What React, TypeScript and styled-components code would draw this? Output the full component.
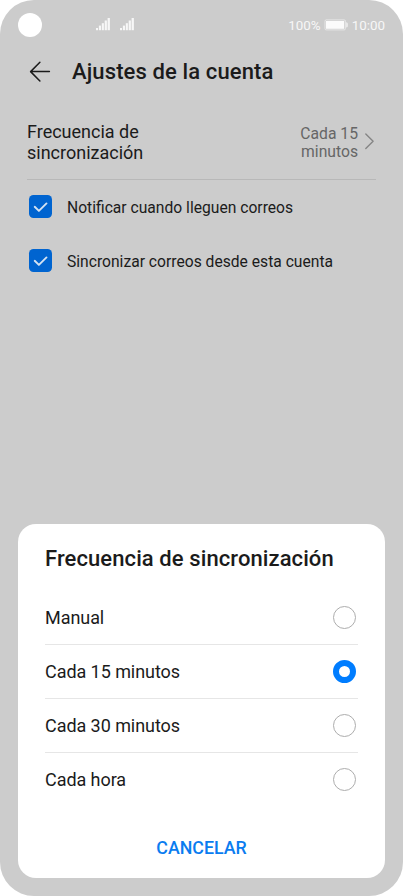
import React, { useState } from "react";
import styled, { createGlobalStyle } from "styled-components";

const GlobalStyle = createGlobalStyle`
  *, *::before, *::after { box-sizing: border-box; }
  html, body { margin: 0; background: #fff; }
  body { font-family: Roboto, "Liberation Sans", sans-serif; }
  button { font: inherit; border: 0; background: none; padding: 0; color: inherit; text-align: left; }
`;

const Phone = styled.div`
  display: flex;
  flex-direction: column;
  width: 403px;
  height: 896px;
  padding-bottom: 18px;
  border-radius: 34px;
  background: #cccccc;
  color: #1b1b1b;
  overflow: hidden;
`;

const StatusBar = styled.header`
  display: flex;
  align-items: center;
  height: 50px;
  padding: 0 18px;
  color: #f7f7f7;
  font-size: 13.4px;
`;

const Camera = styled.span`
  width: 24px;
  height: 24px;
  border-radius: 50%;
  background: #fff;
`;

const Signals = styled.div`
  display: flex;
  gap: 10px;
  margin: 0 0 1px 54px;
`;

const StatusInfo = styled.div`
  display: flex;
  align-items: center;
  margin-left: auto;
  svg { margin: 0 4px 0 3px; }
`;

const TitleBar = styled.div`
  display: flex;
  align-items: center;
  height: 44px;
  padding-left: 29px;
  gap: 21px;
`;

const BackButton = styled.button`
  display: flex;
`;

const Title = styled.h1`
  margin: 0;
  font-size: 22px;
  font-weight: 500;
  line-height: 26px;
  letter-spacing: 0.12px;
  white-space: nowrap;
`;

const FrequencyRow = styled.section`
  display: flex;
  flex-shrink: 0;
  align-items: center;
  height: 75px;
  margin: 11px 27px 0;
  border-bottom: 1px solid #b8b8b8;
  svg { margin-bottom: 2px; }
`;

const FrequencyLabel = styled.div`
  width: 150px;
  font-size: 18px;
  line-height: 21px;
`;

const FrequencyValue = styled.div`
  width: 80px;
  margin: 2px 0 0 auto;
  font-size: 15.7px;
  line-height: 18.5px;
  color: #666;
  text-align: right;
`;

const CheckRow = styled.label`
  display: flex;
  align-items: center;
  height: 54px;
  padding-left: 29px;
  gap: 15px;
  font-size: 15.65px;
  white-space: nowrap;
`;

const CheckBox = styled.span`
  display: flex;
  width: 23px;
  height: 23px;
  margin-bottom: 1px;
  border-radius: 4.5px;
  background: #0064d0;
`;

const Sheet = styled.section`
  display: flex;
  flex-direction: column;
  height: 354px;
  margin: auto 18px 0;
  padding: 22px 27px 0;
  border-radius: 18px;
  background: #fff;
`;

const SheetTitle = styled.h2`
  margin: 0 0 19px;
  font-size: 22px;
  font-weight: 500;
  line-height: 26px;
  letter-spacing: 0.09px;
  white-space: nowrap;
`;

const Option = styled.button`
  display: flex;
  align-items: center;
  justify-content: space-between;
  width: 100%;
  height: 54px;
  padding-right: 2px;
  font-size: 18px;
  letter-spacing: -0.06px;
  border-bottom: 1px solid #e6e6e6;
  &:last-child { border-bottom-color: transparent; }
`;

const Radio = styled.span<{ $checked: boolean }>`
  width: 23px;
  height: 23px;
  border-radius: 50%;
  border: ${(p) => (p.$checked ? "6px solid #007dff" : "1px solid #adadad")};
`;

const CancelButton = styled.button`
  margin: 29px auto 0;
  color: #0a7cf0;
  font-size: 17.8px;
  font-weight: 500;
  line-height: 23px;
`;

const SignalIcon = () => (
  <svg width="14" height="13" viewBox="0 0 14 13" fill="#f7f7f7">
    <rect x="0" y="10" width="2" height="2.2" />
    <rect x="2.9" y="7.6" width="2.1" height="4.6" />
    <rect x="5.8" y="5.2" width="2.1" height="7" />
    <rect x="8.7" y="2.5" width="2.2" height="9.7" />
    <rect x="11.6" y="0" width="2.3" height="12.2" />
  </svg>
);

const BatteryIcon = () => (
  <svg width="24" height="12" viewBox="0 0 24 12">
    <rect x="1" y="0.9" width="20.4" height="10" rx="1.2" fill="none" stroke="#eeeeee" strokeWidth="0.8" />
    <rect x="2" y="2" width="18.2" height="7.8" fill="#fbfbfb" />
    <path d="M22.3 3.3c1.2.2 1.4.8 1.4 2.6s-.2 2.4-1.4 2.6z" fill="#f5f5f5" />
  </svg>
);

const BackIcon = () => (
  <svg width="22" height="22" viewBox="0 0 22 22" fill="none" stroke="#1b1b1b" strokeWidth="1.5" strokeLinecap="round" strokeLinejoin="round">
    <path d="M20.4 10.6H1.6M10.9 1.2 1.6 10.6l9.3 9.4" />
  </svg>
);

const ChevronIcon = () => (
  <svg width="18" height="18" viewBox="0 0 18 18" fill="none" stroke="#858585" strokeWidth="1.4" strokeLinecap="round" strokeLinejoin="round">
    <path d="m7.8 2 7.3 7.2-7.3 7.2" />
  </svg>
);

const CheckIcon = () => (
  <svg width="23" height="23" viewBox="0 0 23 23" fill="none" stroke="#d5e3f2" strokeWidth="1.9" strokeLinecap="round" strokeLinejoin="round">
    <path d="m5.7 11.8 4.2 4.1 7.6-7.5" />
  </svg>
);

const checks = ["Notificar cuando lleguen correos", "Sincronizar correos desde esta cuenta"];
const options = ["Manual", "Cada 15 minutos", "Cada 30 minutos", "Cada hora"];

export default function App() {
  const [selected, setSelected] = useState(options[1]);
  return (
    <>
      <GlobalStyle />
      <Phone>
        <StatusBar>
          <Camera />
          <Signals>
            <SignalIcon />
            <SignalIcon />
          </Signals>
          <StatusInfo>
            <span>100%</span>
            <BatteryIcon />
            <span>10:00</span>
          </StatusInfo>
        </StatusBar>
        <TitleBar>
          <BackButton aria-label="Atrás">
            <BackIcon />
          </BackButton>
          <Title>Ajustes de la cuenta</Title>
        </TitleBar>
        <FrequencyRow>
          <FrequencyLabel>Frecuencia de sincronización</FrequencyLabel>
          <FrequencyValue>Cada 15 minutos</FrequencyValue>
          <ChevronIcon />
        </FrequencyRow>
        {checks.map((label) => (
          <CheckRow key={label}>
            <CheckBox>
              <CheckIcon />
            </CheckBox>
            {label}
          </CheckRow>
        ))}
        <Sheet role="dialog">
          <SheetTitle>Frecuencia de sincronización</SheetTitle>
          <div>
            {options.map((option) => (
              <Option key={option} role="radio" aria-checked={option === selected} onClick={() => setSelected(option)}>
                {option}
                <Radio $checked={option === selected} />
              </Option>
            ))}
          </div>
          <CancelButton>CANCELAR</CancelButton>
        </Sheet>
      </Phone>
    </>
  );
}
